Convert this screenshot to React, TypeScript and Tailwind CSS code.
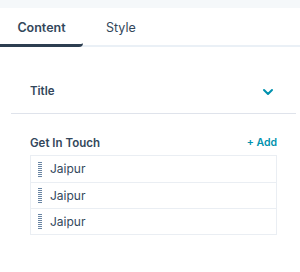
import React, { useState } from 'react';

const rows = ['Jaipur', 'Jaipur', 'Jaipur'];

function DragHandle() {
  return (
    <svg width="4" height="15" viewBox="0 0 4 15" className="shrink-0">
      {Array.from({ length: 8 }).map((_, i) => (
        <rect key={i} x="0" y={i * 2} width="4" height="1" fill="#6a85a3" />
      ))}
    </svg>
  );
}

export default function App() {
  const [tab, setTab] = useState<'content' | 'style'>('content');

  return (
    <div className="w-[300px] h-[272px] bg-white text-[#33475b]" style={{ fontFamily: 'Inter, "Liberation Sans", sans-serif' }}>
      {/* top band */}
      <div className="h-2 bg-[#f5f8fa]" />

      {/* tabs */}
      <div className="flex border-b-2 border-[#eaf0f6]">
        <button
          onClick={() => setTab('content')}
          className={`w-[83px] h-[39px] pt-[5px] text-[12.5px] font-semibold -mb-[2px] ${
            tab === 'content' ? 'border-b-[3px] border-[#2d3e50] rounded-r-sm' : 'border-b-[3px] border-transparent'
          }`}
        >
          Content
        </button>
        <button
          onClick={() => setTab('style')}
          className={`px-[23px] h-[39px] pt-[5px] text-[12.5px] -mb-[2px] ${
            tab === 'style' ? 'border-b-[3px] border-[#2d3e50] font-semibold' : 'border-b-[3px] border-transparent'
          }`}
        >
          Style
        </button>
      </div>

      <div className="px-[11px] -mr-[7px]">
        {/* Title accordion */}
        <div className="h-[66px] flex items-end justify-between pl-[19px] pr-[22px] pb-[14px]">
          <span className="text-[11.5px] font-semibold leading-4">Title</span>
          <svg width="12" height="8" viewBox="0 0 12 8" className="mb-[3px]">
            <path d="M2 2l4 4 4-4" fill="none" stroke="#0091ae" strokeWidth="2" strokeLinecap="round" strokeLinejoin="round" />
          </svg>
        </div>

        <div className="border-t border-[#dfe3eb] pl-[19px] pr-[19px] pt-[21px]">
          <div className="flex items-center justify-between mb-[4px]">
            <span className="text-[11.5px] font-semibold leading-4">Get In Touch</span>
            <button className="text-[10.5px] font-semibold text-[#0091ae] leading-4">+ Add</button>
          </div>

          <div className="border border-[#eaeef3]">
            {rows.map((r, i) => (
              <div
                key={i}
                className={`h-[26px] flex items-center gap-[8px] pl-[7px] ${i > 0 ? 'border-t border-[#eaeef3]' : ''}`}
              >
                <DragHandle />
                <span className="text-[12px]">{r}</span>
              </div>
            ))}
          </div>
        </div>
      </div>
    </div>
  );
}
